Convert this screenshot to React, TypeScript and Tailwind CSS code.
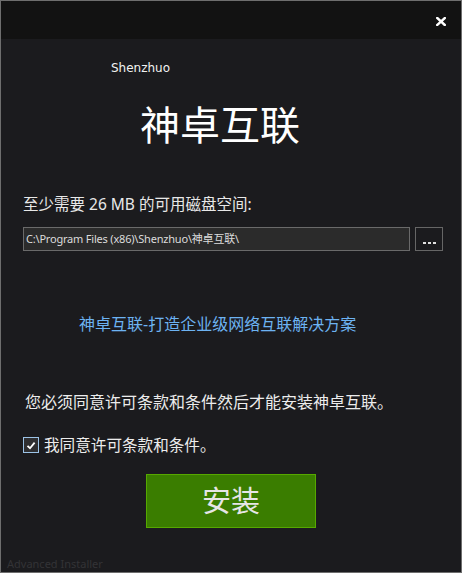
import React from 'react';

const sans = { fontFamily: '"Noto Sans", "Noto Sans CJK SC", sans-serif' };

export default function App() {
  return (
    <div
      className="w-[462px] h-[573px] border border-[#6e6e6e] bg-[#1b1b1e] flex flex-col overflow-hidden text-white"
      style={sans}
    >
      {/* title bar */}
      <div className="h-[38px] bg-[#121212] flex items-center justify-end pr-[15px] shrink-0">
        <svg width="10" height="9" viewBox="0 0 10 9" className="mt-[2px]">
          <path d="M1.2 1 L8.8 8 M8.8 1 L1.2 8" stroke="#ffffff" strokeWidth="2.4" strokeLinecap="square" />
        </svg>
      </div>

      <div className="mt-[21px] pl-[110px] h-[16px] text-[12px] leading-[16px] text-[#f2f2f2]" style={{ fontFamily: '"DejaVu Sans", sans-serif' }}>
        Shenzhuo
      </div>

      <div className="mt-[25px] pl-[139px] h-[48px] text-[40px] leading-[48px] text-white">
        神卓互联
      </div>

      <div className="mt-[45px] pl-[22px] h-[20px] text-[15.5px] leading-[20px] text-[#e8e8e8]">
        至少需要 26 MB 的可用磁盘空间:
      </div>

      <div className="mt-[13px] pl-[22px] flex gap-[5px] h-[24px]">
        <div className="w-[387px] h-[24px] border border-[#6a6a6a] bg-[#2b2b2b] text-[11px] tracking-[-0.2px] leading-[22px] pl-[2px] text-[#dcdcdc] truncate">
          C:\Program Files (x86)\Shenzhuo\神卓互联\
        </div>
        <div className="w-[28px] h-[24px] border border-[#666] bg-[#1b1b1e] flex items-end justify-center pb-[6px] gap-[2px]">
          <span className="w-[3px] h-[2px] bg-[#e0e0e0]" />
          <span className="w-[3px] h-[2px] bg-[#e0e0e0]" />
          <span className="w-[3px] h-[2px] bg-[#e0e0e0]" />
        </div>
      </div>

      <div className="mt-[62px] pl-[78px] h-[22px] text-[16px] leading-[22px] text-[#6db3f2]">
        神卓互联-打造企业级网络互联解决方案
      </div>

      <div className="mt-[56px] pl-[24px] h-[22px] text-[16px] leading-[22px] text-[#ececec]">
        您必须同意许可条款和条件然后才能安装神卓互联。
      </div>

      <div className="mt-[24px] pl-[22px] flex items-center gap-[5px] h-[16px]">
        <div className="w-[16px] h-[16px] border border-[#9cc3e6] bg-[#2e2e30] flex items-center justify-center">
          <svg width="10" height="9" viewBox="0 0 10 9">
            <path d="M1.5 4.8 L4 7.2 L8.6 1.6" stroke="#ffffff" strokeWidth="1.8" fill="none" />
          </svg>
        </div>
        <span className="text-[15.6px] leading-[16px] text-[#ececec]">我同意许可条款和条件。</span>
      </div>

      <div className="mt-[21px] pl-[145px]">
        <button className="w-[170px] h-[54px] bg-[#3a7d00] border border-[#56a800] text-[29px] leading-[52px] text-[#e6e6e6]">
          安装
        </button>
      </div>

      <div className="mt-[29px] pl-[6px] text-[11px] leading-[14px] text-[#333336]">
        Advanced Installer
      </div>
    </div>
  );
}
